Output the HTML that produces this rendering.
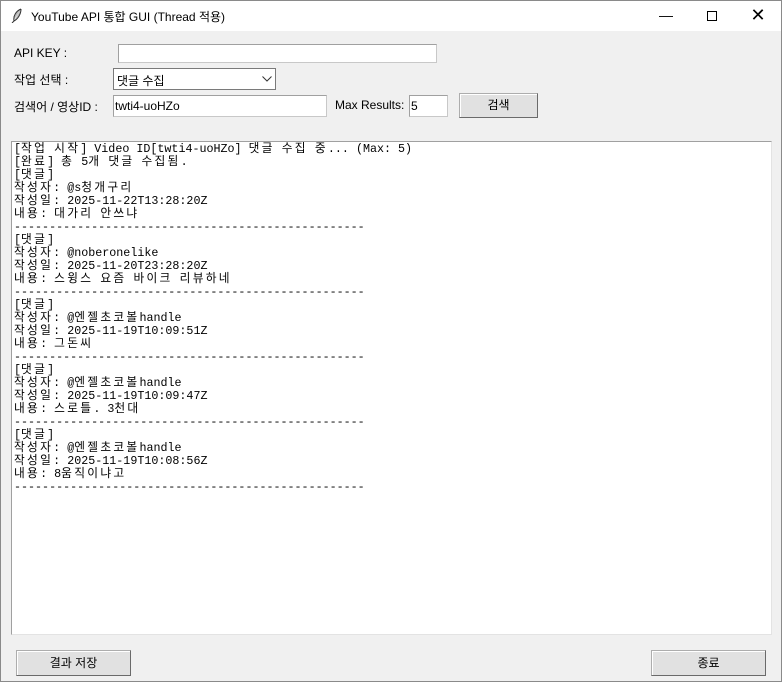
<!DOCTYPE html>
<html><head><meta charset="utf-8">
<style>
*{margin:0;padding:0;box-sizing:border-box}
body{width:782px;height:682px;overflow:hidden;background:#f0f0f0;font-family:"Liberation Sans","Noto Sans CJK KR",sans-serif;font-size:12px;color:#000;position:relative}
.frame{position:absolute;left:0;top:0;width:782px;height:682px;border:1px solid #8a8a8a;z-index:5;pointer-events:none}
.title{position:absolute;left:0;top:0;width:782px;height:31px;background:#fff}
.title .t{position:absolute;left:31px;top:8px;font-size:12px}
.ctl{position:absolute;top:0;width:46px;height:31px;text-align:center;line-height:31px;font-size:14px}
.a{position:absolute}
.lbl{position:absolute;font-size:12px}
.entry{position:absolute;background:#fff;border:1px solid #c8c8c8;border-top-color:#a0a0a0;border-left-color:#a0a0a0}
.btn{position:absolute;background:#e1e1e1;border:1px solid #adadad;border-right-color:#6a6a6a;border-bottom-color:#6a6a6a;box-shadow:inset 1px 1px 0 #fff;text-align:center;font-size:12px}
.txt{position:absolute;left:11px;top:141px;width:761px;height:494px;background:#fff;border:1px solid #a0a0a0;border-right-color:#e3e3e3;border-bottom-color:#e3e3e3}
pre{position:absolute;left:2px;top:1px;font-family:"Liberation Mono","Noto Sans CJK KR",monospace;font-size:11.7px;line-height:13px;white-space:pre}
.k{letter-spacing:2.3px}
</style></head><body>
<div class="frame"></div>
<div class="title">
<svg class="a" style="left:11px;top:8px" width="12" height="15" viewBox="0 0 12 15"><path d="M10 1 C5 3 2 8 3 13 L1 15 M3 13 C7 11 10 6 10 1" fill="#bbb" stroke="#333" stroke-width="1"/></svg>
<div class="t">YouTube API 통합 GUI (Thread 적용)</div>
<div class="ctl" style="left:643px">&#8212;</div>
<div class="ctl" style="left:689px"><span style="display:inline-block;width:10px;height:10px;border:1px solid #000;vertical-align:middle"></span></div>
<div class="ctl" style="left:735px;font-size:18px">&#10005;</div>
</div>
<div class="lbl" style="left:14px;top:46px">API KEY :</div>
<div class="entry" style="left:118px;top:44px;width:319px;height:19px"></div>
<div class="lbl" style="left:14px;top:71px">작업 선택 :</div>
<div class="entry" style="left:113px;top:68px;width:163px;height:22px;border:1px solid #7a7a7a;background:#fff"><span style="position:absolute;left:3px;top:3px">댓글 수집</span>
<svg class="a" style="left:148px;top:7px" width="10" height="6"><path d="M0.5 0.5 L5 5 L9.5 0.5" fill="none" stroke="#333"/></svg></div>
<div class="lbl" style="left:14px;top:98px">검색어 / 영상ID :</div>
<div class="entry" style="left:113px;top:95px;width:214px;height:22px"><span style="position:absolute;left:1px;top:3px">twti4-uoHZo</span></div>
<div class="lbl" style="left:335px;top:98px">Max Results:</div>
<div class="entry" style="left:409px;top:95px;width:39px;height:22px"><span style="position:absolute;left:1px;top:3px">5</span></div>
<div class="btn" style="left:459px;top:93px;width:79px;height:25px;line-height:23px">검색</div>
<div class="txt"><pre>[<span class="k">작업</span> <span class="k">시작</span>] Video ID[twti4-uoHZo] <span class="k">댓글</span> <span class="k">수집</span> <span class="k">중</span>... (Max: 5)
[<span class="k">완료</span>] <span class="k">총</span> 5<span class="k">개</span> <span class="k">댓글</span> <span class="k">수집됨</span>.
[<span class="k">댓글</span>]
<span class="k">작성자</span>: @s<span class="k">청개구리</span>
<span class="k">작성일</span>: 2025-11-22T13:28:20Z
<span class="k">내용</span>: <span class="k">대가리</span> <span class="k">안쓰냐</span>
--------------------------------------------------
[<span class="k">댓글</span>]
<span class="k">작성자</span>: @noberonelike
<span class="k">작성일</span>: 2025-11-20T23:28:20Z
<span class="k">내용</span>: <span class="k">스윙스</span> <span class="k">요즘</span> <span class="k">바이크</span> <span class="k">리뷰하네</span>
--------------------------------------------------
[<span class="k">댓글</span>]
<span class="k">작성자</span>: @<span class="k">엔젤초코볼</span>handle
<span class="k">작성일</span>: 2025-11-19T10:09:51Z
<span class="k">내용</span>: <span class="k">그돈씨</span>
--------------------------------------------------
[<span class="k">댓글</span>]
<span class="k">작성자</span>: @<span class="k">엔젤초코볼</span>handle
<span class="k">작성일</span>: 2025-11-19T10:09:47Z
<span class="k">내용</span>: <span class="k">스로틀</span>. 3<span class="k">천대</span>
--------------------------------------------------
[<span class="k">댓글</span>]
<span class="k">작성자</span>: @<span class="k">엔젤초코볼</span>handle
<span class="k">작성일</span>: 2025-11-19T10:08:56Z
<span class="k">내용</span>: 8<span class="k">움직이냐고</span>
--------------------------------------------------</pre></div>
<div class="btn" style="left:16px;top:650px;width:115px;height:26px;line-height:24px">결과 저장</div>
<div class="btn" style="left:651px;top:650px;width:115px;height:26px;line-height:24px">종료</div>
</body></html>
